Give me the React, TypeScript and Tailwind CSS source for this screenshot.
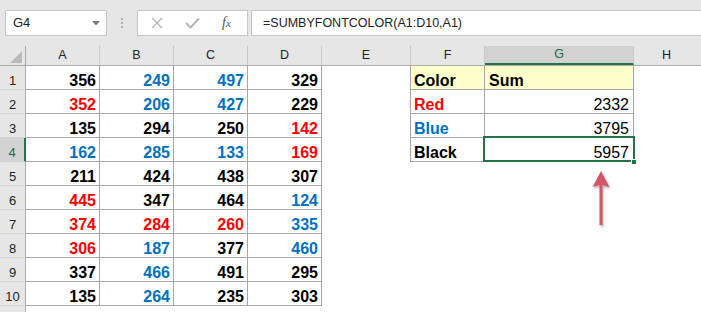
import React from "react";

type Tone = "k" | "r" | "b";

const tone: Record<Tone, string> = {
  k: "text-black",
  r: "text-[#ff0000]",
  b: "text-[#0070c0]",
};

const data: [number, Tone][][] = [
  [[356, "k"], [249, "b"], [497, "b"], [329, "k"]],
  [[352, "r"], [206, "b"], [427, "b"], [229, "k"]],
  [[135, "k"], [294, "k"], [250, "k"], [142, "r"]],
  [[162, "b"], [285, "b"], [133, "b"], [169, "r"]],
  [[211, "k"], [424, "k"], [438, "k"], [307, "k"]],
  [[445, "r"], [347, "k"], [464, "k"], [124, "b"]],
  [[374, "r"], [284, "r"], [260, "r"], [335, "b"]],
  [[306, "r"], [187, "b"], [377, "k"], [460, "b"]],
  [[337, "k"], [466, "b"], [491, "k"], [295, "k"]],
  [[135, "k"], [264, "b"], [235, "k"], [303, "k"]],
];

// summary table F1:G4
const summary: { label: string; color: Tone; sum: string }[] = [
  { label: "Color", color: "k", sum: "Sum" },
  { label: "Red", color: "r", sum: "2332" },
  { label: "Blue", color: "b", sum: "3795" },
  { label: "Black", color: "k", sum: "5957" },
];

function Toolbar() {
  return (
    <div className="h-[46px] bg-[#e6e6e6] flex items-start pt-[10px] pl-[5px]">
      <div className="w-[102px] h-[26px] bg-white border border-[#c6c6c6] flex items-center justify-between pl-[7px] pr-[6px]">
        <span className="text-[13px] text-[#222]">G4</span>
        <svg width="8" height="5" viewBox="0 0 8 5">
          <path d="M0 0 L8 0 L4 4.5 Z" fill="#7a7a7a" />
        </svg>
      </div>
      <div className="w-[30px] h-[26px] flex flex-col items-center justify-center gap-[2px]">
        <span className="w-[2px] h-[2px] bg-[#b0b0b0]" />
        <span className="w-[2px] h-[2px] bg-[#b0b0b0]" />
        <span className="w-[2px] h-[2px] bg-[#b0b0b0]" />
      </div>
      <div className="w-[111px] h-[26px] bg-white border border-[#c6c6c6] flex items-center">
        <svg width="12" height="12" viewBox="0 0 12 12" className="ml-[13px]">
          <path d="M1 1 L11 11 M11 1 L1 11" stroke="#b5b5b5" strokeWidth="1.4" />
        </svg>
        <svg width="15" height="12" viewBox="0 0 15 12" className="ml-[22px]">
          <path d="M1 6 L5.5 10.5 L14 1.5" stroke="#b5b5b5" strokeWidth="2" fill="none" />
        </svg>
        <span className="ml-[22px] text-[14px] italic text-[#555] font-['Liberation_Serif',serif] leading-none">
          f<span className="text-[11px]">x</span>
        </span>
      </div>
      <div className="flex-1 h-[26px] ml-[3px] bg-white border border-[#c6c6c6] border-r-0 flex items-center pl-[11px]">
        <span className="text-[12.5px] text-[#222]">=SUMBYFONTCOLOR(A1:D10,A1)</span>
      </div>
    </div>
  );
}

function HeaderRow() {
  const cols = [
    { k: "A", w: "w-[74px]" },
    { k: "B", w: "w-[74px]" },
    { k: "C", w: "w-[74px]" },
    { k: "D", w: "w-[74px]" },
    { k: "E", w: "w-[89px]" },
    { k: "F", w: "w-[74px]" },
  ];
  return (
    <div className="flex h-[20px] bg-[#e6e6e6] border-b border-[#ababab] text-[12.5px] text-[#222]">
      <div className="w-[26px] border-r border-[#ababab] flex items-end justify-end pr-[3px] pb-[2px]">
        <svg width="12" height="12" viewBox="0 0 12 12">
          <path d="M12 0 L12 12 L0 12 Z" fill="#b9b9b9" />
        </svg>
      </div>
      {cols.map((c) => (
        <div key={c.k} className={`${c.w} border-r border-[#c8c8c8] flex items-center justify-center`}>
          {c.k}
        </div>
      ))}
      <div className="w-[149px] bg-[#d2d2d2] border-r border-[#c8c8c8] border-b-2 border-b-[#217346] flex items-center justify-center text-[#1e6b41]">
        G
      </div>
      <div className="flex-1 flex items-center justify-center pr-[2px]">H</div>
    </div>
  );
}

function DataRow({ i }: { i: number }) {
  const row = data[i];
  const s = summary[i];
  const selected = i === 3;
  return (
    <div className="flex h-[24px]">
      <div
        className={
          selected
            ? "w-[26px] bg-[#d2d2d2] border-b border-[#d4d4d4] border-r-2 border-r-[#217346] flex items-end justify-center text-[13px] leading-4 text-[#1e6b41]"
            : "w-[26px] bg-[#e6e6e6] border-b border-[#d4d4d4] border-r border-r-[#ababab] flex items-end justify-center text-[13px] leading-4 text-[#222]"
        }
      >
        {i + 1}
      </div>
      {row.map(([v, t], j) => (
        <div
          key={j}
          className={`w-[74px] border-r border-b border-[#a6a6a6] flex items-end justify-end pr-[3px] text-[16px] leading-4 font-bold ${tone[t]}`}
        >
          {v}
        </div>
      ))}
      <div className="w-[88px]" />
      {s ? (
        <>
          <div
            className={`w-[75px] border-l border-r border-b border-[#a6a6a6] flex items-end pl-[3px] text-[16px] leading-4 font-bold ${tone[s.color]} ${
              i === 0 ? "bg-[#ffffcc]" : ""
            }`}
          >
            {s.label}
          </div>
          {i === 0 ? (
            <div className="w-[149px] bg-[#ffffcc] border-r border-b border-[#a6a6a6] flex items-end pl-[4px] text-[16px] leading-4 font-bold text-black">
              {s.sum}
            </div>
          ) : (
            <div className="w-[149px] border-r border-b border-[#a6a6a6] flex items-end justify-end pr-[4px] text-[16px] leading-4 text-black">
              {s.sum}
            </div>
          )}
        </>
      ) : null}
    </div>
  );
}

export default function App() {
  return (
    <div className="relative w-[701px] h-[312px] overflow-hidden bg-white font-['Liberation_Sans',Arial,sans-serif]">
      <Toolbar />
      <HeaderRow />
      {data.map((_, i) => (
        <DataRow key={i} i={i} />
      ))}
      <div className="flex h-[10px]">
        <div className="w-[26px] bg-[#e6e6e6] border-r border-[#ababab]" />
      </div>

      {/* active cell G4 */}
      <div className="absolute left-[483px] top-[136px] w-[152px] h-[26px] border-2 border-[#217346]" />
      <div className="absolute left-[631px] top-[159px] w-[6px] h-[6px] bg-[#217346] border border-white" />

      {/* annotation arrow */}
      <svg
        className="absolute left-[588px] top-[168px] drop-shadow-[1px_2px_1px_rgba(0,0,0,0.3)]"
        width="26"
        height="62"
        viewBox="0 0 26 62"
      >
        <path d="M13 3 L21.5 19 L14.5 17 L14.5 57 L11.5 57 L11.5 17 L4.5 19 Z" fill="#d35767" />
      </svg>
    </div>
  );
}
